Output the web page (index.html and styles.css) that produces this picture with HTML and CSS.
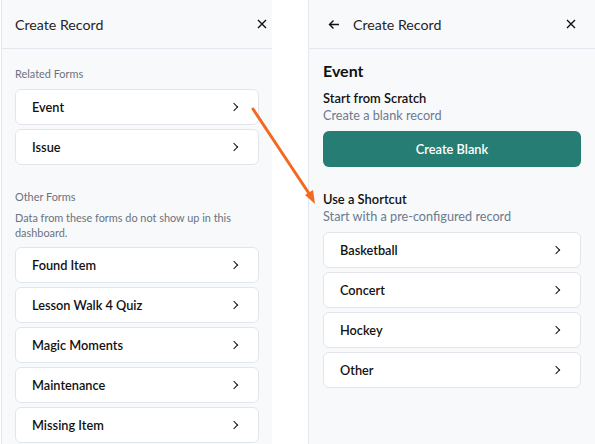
FILE: index.html
```html
<!DOCTYPE html>
<html lang="en">
<head>
    <meta charset="UTF-8">
    <meta name="viewport" content="width=device-width, initial-scale=1.0">
    <title>Create Record</title>
    <link rel="stylesheet" href="styles.css">
</head>
<body>
    <div class="screen">
        <div class="panel panel-left">
            <div class="panel-header">
                <span class="title">Create Record</span>
                <button class="icon-btn" aria-label="Close">
                    <svg width="10" height="10" viewBox="0 0 10 10"><path d="M1 1L9 9M9 1L1 9" stroke="#111" stroke-width="1.4" fill="none"/></svg>
                </button>
            </div>
            <div class="panel-body">
                <div class="label first">Related Forms</div>
                <div class="list">
                    <div class="card"><span>Event</span><i class="chev"></i></div>
                    <div class="card"><span>Issue</span><i class="chev"></i></div>
                </div>
                <div class="label">Other Forms</div>
                <div class="note">Data from these forms do not show up in this dashboard.</div>
                <div class="list">
                    <div class="card"><span>Found Item</span><i class="chev"></i></div>
                    <div class="card"><span>Lesson Walk 4 Quiz</span><i class="chev"></i></div>
                    <div class="card"><span>Magic Moments</span><i class="chev"></i></div>
                    <div class="card"><span>Maintenance</span><i class="chev"></i></div>
                    <div class="card"><span>Missing Item</span><i class="chev"></i></div>
                </div>
            </div>
        </div>

        <div class="panel panel-right">
            <div class="panel-header">
                <button class="icon-btn back" aria-label="Back">
                    <svg width="12" height="11" viewBox="0 0 12 11"><path d="M11 5.5H1.5M5.5 1.5L1.5 5.5L5.5 9.5" stroke="#111" stroke-width="1.4" fill="none"/></svg>
                </button>
                <span class="title">Create Record</span>
                <button class="icon-btn" aria-label="Close">
                    <svg width="10" height="10" viewBox="0 0 10 10"><path d="M1 1L9 9M9 1L1 9" stroke="#111" stroke-width="1.4" fill="none"/></svg>
                </button>
            </div>
            <div class="panel-body">
                <h2 class="form-name">Event</h2>
                <div class="sub-title">Start from Scratch</div>
                <div class="sub-text">Create a blank record</div>
                <button class="primary">Create Blank</button>
                <div class="sub-title shortcut">Use a Shortcut</div>
                <div class="sub-text">Start with a pre-configured record</div>
                <div class="list">
                    <div class="card"><span>Basketball</span><i class="chev"></i></div>
                    <div class="card"><span>Concert</span><i class="chev"></i></div>
                    <div class="card"><span>Hockey</span><i class="chev"></i></div>
                    <div class="card"><span>Other</span><i class="chev"></i></div>
                </div>
            </div>
        </div>

        <!-- annotation arrow -->
        <svg class="arrow" width="80" height="110" viewBox="0 0 80 110">
            <path d="M3 3L62 92" stroke="#f26a21" stroke-width="3" stroke-linecap="round" fill="none"/>
            <path d="M55 89L65 98L63 84Z" fill="#f26a21"/>
        </svg>
    </div>
</body>
</html>
```

FILE: styles.css
```css
* {
    box-sizing: border-box;
}

body {
    margin: 0;
    background: #fff;
    font-family: Lato, "Noto Sans", sans-serif;
    color: #111;
}

.screen {
    position: relative;
    display: flex;
    gap: 36px;
    height: 444px;
    overflow: hidden;
}

.panel {
    background: #f8f9fa;
    border-left: 1px solid #e3e7ee;
    height: 100%;
}

.panel-left {
    width: 271px;
    margin-left: 1px;
}

.panel-right {
    flex: 1;
}

.panel-header {
    display: flex;
    align-items: center;
    height: 49px;
    border-bottom: 1px solid #e3e7ee;
    padding: 0 5px 0 13px;
}

.panel-right .panel-header {
    padding: 0 19px 0 19px;
}

.title {
    flex: 1;
    font-size: 14.2px;
    color: #1f2328;
}

.icon-btn {
    border: none;
    background: none;
    padding: 0;
    width: 10px;
    height: 10px;
    display: flex;
    align-items: center;
    justify-content: center;
}

.icon-btn.back {
    width: 12px;
    margin-right: 13px;
}

.panel-left .panel-body {
    padding: 0 13px 0 13px;
}

.panel-right .panel-body {
    padding: 0 14px;
}

.label {
    font-size: 10.9px;
    line-height: 16px;
    color: #6b7280;
    margin: 24px 0 5px;
}

.label.first {
    margin: 17px 0 7px;
}

.note {
    font-size: 10.9px;
    line-height: 15px;
    color: #6b7280;
    margin-bottom: 7px;
}

.list {
    display: flex;
    flex-direction: column;
    gap: 4px;
}

.card {
    display: flex;
    align-items: center;
    justify-content: space-between;
    height: 36px;
    padding: 0 21px 0 16px;
    background: #fff;
    border: 1px solid #e2e6ec;
    border-radius: 6px;
    font-size: 12.75px;
    font-weight: 600;
}

.chev {
    width: 6px;
    height: 6px;
    border-top: 1.4px solid #111;
    border-right: 1.4px solid #111;
    transform: rotate(45deg);
}

.form-name {
    margin: 12px 0 0;
    font-size: 16px;
    line-height: 20px;
    font-weight: 700;
}

.sub-title {
    margin-top: 8px;
    font-size: 12.9px;
    line-height: 18px;
    font-weight: 600;
}

.sub-title.shortcut {
    margin-top: 23px;
}

.sub-text {
    font-size: 12.7px;
    line-height: 17px;
    color: #6b7a90;
    margin-bottom: 7px;
}

.primary {
    display: block;
    width: 100%;
    height: 36px;
    border: none;
    border-radius: 6px;
    background: #267d74;
    color: #fff;
    font-family: inherit;
    font-size: 12.8px;
    font-weight: 600;
}

.arrow {
    position: absolute;
    left: 250px;
    top: 106px;
}
```
